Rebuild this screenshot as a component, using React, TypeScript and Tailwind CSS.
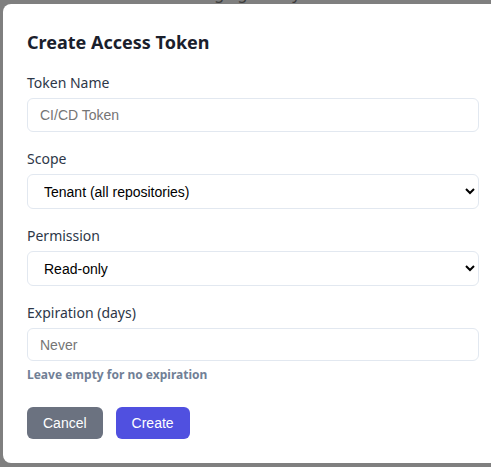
import React from 'react';

export default function App() {
  return (
    <div className="w-[491px] h-[467px] overflow-hidden bg-[#7f7f7f] relative font-['Noto_Sans',sans-serif]">
      {/* faint page behind the overlay */}
      <div className="absolute top-[-19px] left-[172px] text-[16px] text-[#3c3c3c]">Manage gateway</div>

      {/* Modal */}
      <div className="ml-[3px] mt-[4px] w-[502px] bg-white rounded-lg p-6">
        <h2 className="text-lg leading-7 font-bold text-[#1a202c] mb-4">Create Access Token</h2>

        <div className="flex flex-col gap-4">
          <div>
            <label className="block text-sm leading-[22px] text-[#2d3748] mb-1">Token Name</label>
            <input
              type="text"
              placeholder="CI/CD Token"
              className="w-[452px] h-[34px] px-3 border border-[#e2e8f0] rounded-md text-sm font-['Liberation_Sans',sans-serif] placeholder:text-[#757575] outline-none"
            />
          </div>

          <div>
            <label className="block text-sm leading-[22px] text-[#2d3748] mb-1">Scope</label>
            <select className="w-[452px] h-[35px] px-3 border border-[#e2e8f0] rounded-md text-sm text-black font-['Liberation_Sans',sans-serif] outline-none">
              <option>Tenant (all repositories)</option>
            </select>
          </div>

          <div>
            <label className="block text-sm leading-[22px] text-[#2d3748] mb-1">Permission</label>
            <select className="w-[452px] h-[35px] px-3 border border-[#e2e8f0] rounded-md text-sm text-black font-['Liberation_Sans',sans-serif] outline-none">
              <option>Read-only</option>
            </select>
          </div>

          <div>
            <label className="block text-sm leading-[22px] text-[#2d3748] mb-1">Expiration (days)</label>
            <input
              type="number"
              placeholder="Never"
              className="w-[452px] h-[33px] px-3 border border-[#e2e8f0] rounded-md text-sm font-['Liberation_Sans',sans-serif] placeholder:text-[#757575] outline-none"
            />
            <p className="mt-[6px] text-xs leading-4 font-bold text-[#718096]">Leave empty for no expiration</p>
          </div>
        </div>

        <div className="flex gap-[13px] mt-6">
          <button className="h-[32px] px-4 rounded-md bg-[#6b7280] text-white text-sm font-['Liberation_Sans',sans-serif]">
            Cancel
          </button>
          <button className="h-[32px] px-4 rounded-md bg-[#5050e0] text-white text-sm font-['Liberation_Sans',sans-serif]">
            Create
          </button>
        </div>
      </div>
    </div>
  );
}
